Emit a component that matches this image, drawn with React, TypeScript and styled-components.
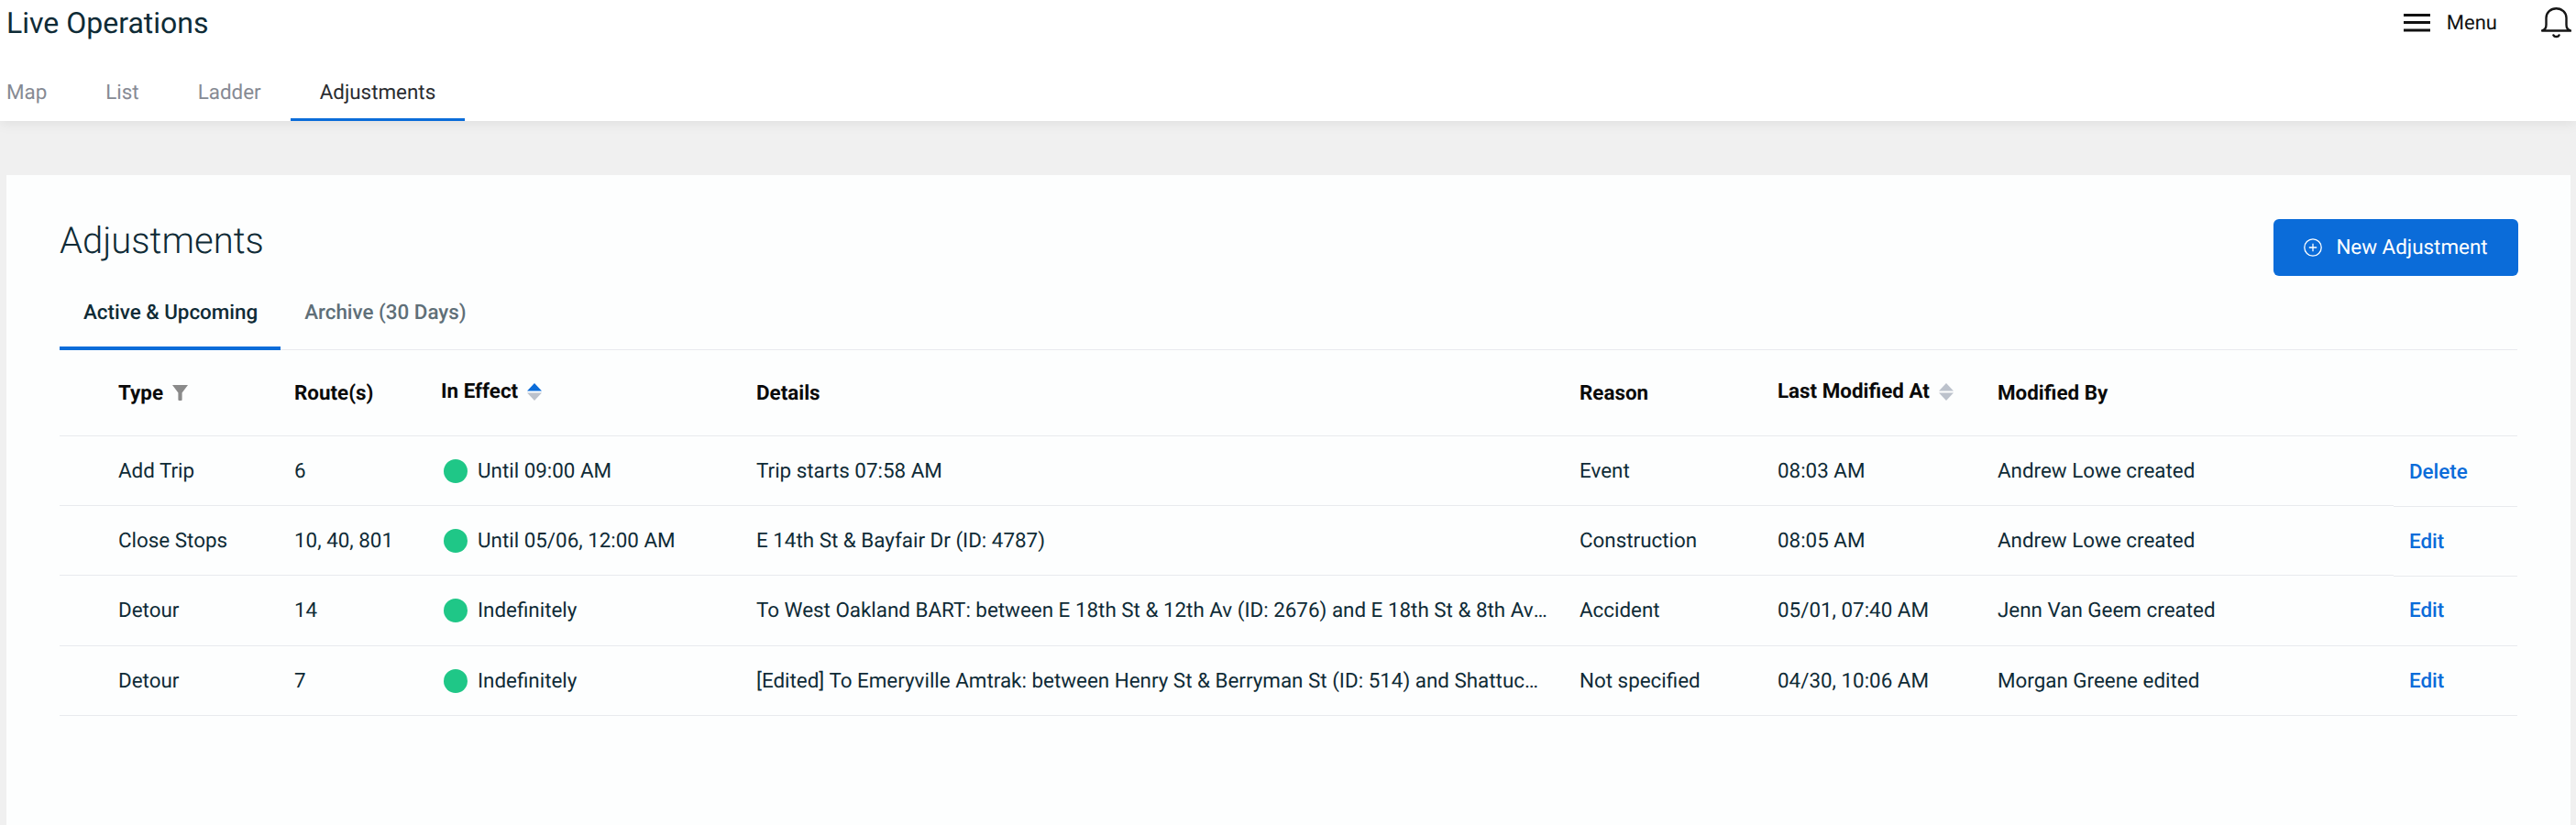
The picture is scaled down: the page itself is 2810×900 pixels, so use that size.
import { createGlobalStyle, styled } from 'styled-components'

const GlobalStyle = createGlobalStyle`
  html, body {
    margin: 0;
    padding: 0;
    height: 100%;
    background: #f0f0f0;
    font-family: Roboto, "Liberation Sans", sans-serif;
    font-size: 22.4px;
    color: #0f2b36;
    text-rendering: geometricPrecision;
  }
  #root {
    height: 900px;
    overflow: hidden;
  }
`

const Page = styled.div`
  display: flex;
  flex-direction: column;
  height: 900px;
`

const TopBar = styled.header`
  position: relative;
  height: 132px;
  flex: none;
  display: flex;
  flex-direction: column;
  background: #fff;
  box-shadow: 0 2px 14px rgba(0, 0, 0, 0.08);
`

const TitleRow = styled.div`
  display: flex;
  align-items: center;
  height: 50px;
  padding: 0 5px 0 7px;
`

const PageTitle = styled.h1`
  flex: 1;
  margin: 0;
  font-size: 32px;
  font-weight: 400;
  line-height: 50px;
  color: #0f2b36;
`

const MenuButton = styled.div`
  display: flex;
  align-items: center;
  gap: 18px;
  font-size: 22px;
  color: #111;
  margin-right: 48px;
`

const NavTabs = styled.nav`
  display: flex;
  height: 82px;
`

const NavTab = styled.div<{ $active?: boolean }>`
  display: flex;
  align-items: center;
  padding: 22px 32px 0;
  height: 82px;
  box-sizing: border-box;
  border-bottom: 3px solid ${(p) => (p.$active ? '#0b6cd9' : 'transparent')};
  color: ${(p) => (p.$active ? '#2a2c30' : '#868a93')};
  &:first-child {
    padding-left: 7px;
  }
`

const Card = styled.main`
  flex: 1;
  margin: 59px 6px 0 7px;
  padding: 48px 58px 0 58px;
  background: #fdfefe;
`

const CardHead = styled.div`
  display: flex;
  justify-content: space-between;
  align-items: flex-start;
  height: 62px;
`

const Heading = styled.h2`
  margin: 0;
  font-size: 40px;
  font-weight: 300;
  line-height: 47px;
  color: #0f2b36;
`

const NewButton = styled.button`
  all: unset;
  box-sizing: border-box;
  display: flex;
  align-items: center;
  justify-content: center;
  gap: 15px;
  width: 267px;
  height: 62px;
  margin-right: -1px;
  border-radius: 6px;
  background: #0b6cd9;
  color: #fff;
  font-size: 22.4px;
`

const SubTabs = styled.div`
  display: flex;
  height: 81px;
  margin-top: -1px;
  box-sizing: content-box;
  border-bottom: 1px solid #e8eaee;
`

const SubTab = styled.div<{ $active?: boolean }>`
  display: flex;
  align-items: center;
  padding: 3px 25px 0 26px;
  margin-bottom: -1px;
  box-sizing: border-box;
  font-weight: 500;
  border-bottom: 4px solid ${(p) => (p.$active ? '#0b6cd9' : 'transparent')};
  color: ${(p) => (p.$active ? '#0f2b36' : '#5f6f78')};
`

const tableColumns = '64px 192px 160px 344px 898px 216px 240px 432px 135px'

const HeadRow = styled.div`
  display: grid;
  grid-template-columns: ${tableColumns};
  height: 94px;
  box-sizing: border-box;
  border-bottom: 1px solid #e8eaee;
`

const HeadCell = styled.div<{ $sorted?: boolean }>`
  display: flex;
  align-items: center;
  gap: 10px;
  font-weight: 700;
  color: #0a0a0a;
  white-space: nowrap;
  padding-bottom: ${(p) => (p.$sorted ? '3px' : '0')};
`

const Row = styled.div<{ $tall?: boolean }>`
  display: grid;
  grid-template-columns: ${tableColumns};
  height: ${(p) => (p.$tall ? '77px' : '76px')};
`

const Cell = styled.div`
  display: flex;
  align-items: center;
  min-width: 0;
  box-sizing: border-box;
  white-space: nowrap;
  border-bottom: 1px solid #e8eaee;
`

const DetailCell = styled(Cell)<{ $inset?: number }>`
  padding-right: ${(p) => p.$inset ?? 33}px;
`

const Truncated = styled.span`
  display: block;
  min-width: 0;
  overflow: hidden;
  white-space: nowrap;
  text-overflow: ellipsis;
`

const StatusDot = styled.span`
  flex: none;
  width: 26px;
  height: 26px;
  margin: 0 11px 0 3px;
  border-radius: 50%;
  background: #1fc787;
`

const ActionCell = styled(Cell)<{ $low?: boolean }>`
  padding-left: 17px;
  margin-bottom: ${(p) => (p.$low ? '-1px' : '0')};
  padding-top: ${(p) => (p.$low ? '1px' : '0')};
`

const ActionLink = styled.a`
  color: #0b6cd9;
  font-weight: 500;
`

function HamburgerIcon() {
  return (
    <svg width="29" height="20" viewBox="0 0 29 20" fill="#111">
      <rect x="0" y="0" width="29" height="3" />
      <rect x="0" y="8" width="29" height="3" />
      <rect x="0" y="16.5" width="29" height="3" />
    </svg>
  )
}

function BellIcon() {
  return (
    <svg width="33" height="34" viewBox="0 0 33 34" fill="none" stroke="#161616" strokeWidth="2.4" strokeLinecap="round" strokeLinejoin="round">
      <path d="M1 25.5 C4 24.5 5.5 22.5 5.5 19 V11.5 C5.5 5.5 10.5 1.2 16.5 1.2 C22.5 1.2 27.5 5.5 27.5 11.5 V19 C27.5 22.5 29 24.5 32 25.5 Z" />
      <path d="M13.5 30.5 C14.5 32.6 18.5 32.6 19.5 30.5" strokeWidth="2.6" />
    </svg>
  )
}

function PlusCircleIcon() {
  return (
    <svg width="20" height="20" viewBox="0 0 20 20" fill="none" stroke="#fff" strokeWidth="1.3">
      <circle cx="10" cy="10" r="9.2" />
      <path d="M10 5.8 V14.2 M5.8 10 H14.2" />
    </svg>
  )
}

function FilterIcon() {
  return (
    <svg width="17" height="17" viewBox="0 0 17 17" fill="#8a8a8a">
      <path d="M0 0 H17 L10.6 8.5 V16 Q10.6 17 9.6 17 H7.4 Q6.4 17 6.4 16 V8.5 Z" />
    </svg>
  )
}

function SortIcon({ active }: { active?: boolean }) {
  return (
    <svg width="16" height="19" viewBox="0 0 16 19">
      <path d="M8 0 L16 8.5 H0 Z" fill={active ? '#0b6cd9' : '#bcc2cc'} />
      <path d="M0 10.5 H16 L8 19 Z" fill="#bcc2cc" />
    </svg>
  )
}

const rows = [
  {
    type: 'Add Trip',
    routes: '6',
    effect: 'Until 09:00 AM',
    details: 'Trip starts 07:58 AM',
    reason: 'Event',
    at: '08:03 AM',
    by: 'Andrew Lowe created',
    action: 'Delete',
    low: true,
  },
  {
    type: 'Close Stops',
    routes: '10, 40, 801',
    effect: 'Until 05/06, 12:00 AM',
    details: 'E 14th St & Bayfair Dr (ID: 4787)',
    reason: 'Construction',
    at: '08:05 AM',
    by: 'Andrew Lowe created',
    action: 'Edit',
    low: true,
  },
  {
    type: 'Detour',
    routes: '14',
    effect: 'Indefinitely',
    details: 'To West Oakland BART: between E 18th St & 12th Av (ID: 2676) and E 18th St & 8th Av (ID: 2677)',
    reason: 'Accident',
    at: '05/01, 07:40 AM',
    by: 'Jenn Van Geem created',
    action: 'Edit',
    tall: true,
  },
  {
    type: 'Detour',
    routes: '7',
    effect: 'Indefinitely',
    details: '[Edited] To Emeryville Amtrak: between Henry St & Berryman St (ID: 514) and Shattuck Av & 40th St (ID: 990)',
    detailsInset: 40,
    reason: 'Not specified',
    at: '04/30, 10:06 AM',
    by: 'Morgan Greene edited',
    action: 'Edit',
  },
]

export default function App() {
  return (
    <Page>
      <GlobalStyle />
      <TopBar>
        <TitleRow>
          <PageTitle>Live Operations</PageTitle>
          <MenuButton>
            <HamburgerIcon />
            Menu
          </MenuButton>
          <BellIcon />
        </TitleRow>
        <NavTabs>
          <NavTab>Map</NavTab>
          <NavTab>List</NavTab>
          <NavTab>Ladder</NavTab>
          <NavTab $active>Adjustments</NavTab>
        </NavTabs>
      </TopBar>
      <Card>
        <CardHead>
          <Heading>Adjustments</Heading>
          <NewButton>
            <PlusCircleIcon />
            New Adjustment
          </NewButton>
        </CardHead>
        <SubTabs>
          <SubTab $active>Active &amp; Upcoming</SubTab>
          <SubTab>Archive (30 Days)</SubTab>
        </SubTabs>
        <HeadRow>
          <span />
          <HeadCell>
            Type <FilterIcon />
          </HeadCell>
          <HeadCell>Route(s)</HeadCell>
          <HeadCell $sorted>
            In Effect <SortIcon active />
          </HeadCell>
          <HeadCell>Details</HeadCell>
          <HeadCell>Reason</HeadCell>
          <HeadCell $sorted>
            Last Modified At <SortIcon />
          </HeadCell>
          <HeadCell>Modified By</HeadCell>
        </HeadRow>
        {rows.map((r, i) => (
          <Row key={i} $tall={r.tall}>
            <Cell />
            <Cell>{r.type}</Cell>
            <Cell>{r.routes}</Cell>
            <Cell>
              <StatusDot />
              {r.effect}
            </Cell>
            <DetailCell $inset={r.detailsInset}>
              <Truncated>{r.details}</Truncated>
            </DetailCell>
            <Cell>{r.reason}</Cell>
            <Cell>{r.at}</Cell>
            <Cell>{r.by}</Cell>
            <ActionCell $low={r.low}>
              <ActionLink>{r.action}</ActionLink>
            </ActionCell>
          </Row>
        ))}
      </Card>
    </Page>
  )
}
